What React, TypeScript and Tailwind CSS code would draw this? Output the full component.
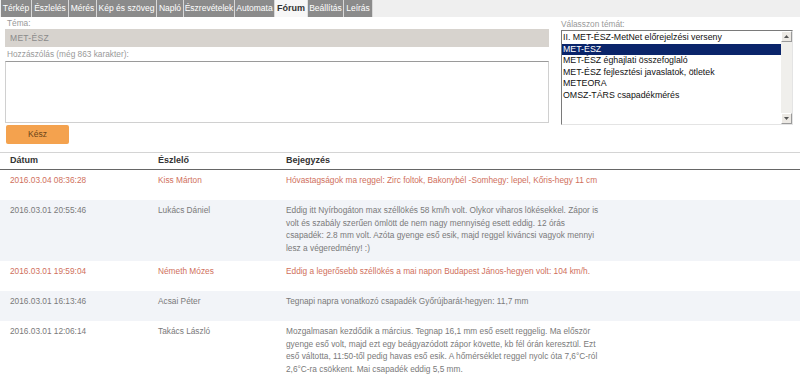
import React from "react";

const tabs: { label: string; w: number; active?: boolean }[] = [
  { label: "Térkép", w: 31 },
  { label: "Észlelés", w: 37 },
  { label: "Mérés", w: 28 },
  { label: "Kép és szöveg", w: 60 },
  { label: "Napló", w: 27 },
  { label: "Észrevételek", w: 51 },
  { label: "Automata", w: 40 },
  { label: "Fórum", w: 33, active: true },
  { label: "Beállítás", w: 36 },
  { label: "Leírás", w: 29 },
];

const topics = [
  "II. MET-ÉSZ-MetNet előrejelzési verseny",
  "MET-ÉSZ",
  "MET-ÉSZ éghajlati összefoglaló",
  "MET-ÉSZ fejlesztési javaslatok, ötletek",
  "METEORA",
  "OMSZ-TÁRS csapadékmérés",
];

type Row = { date: string; name: string; lines: string[]; red?: boolean; shade?: boolean };

const rows: Row[] = [
  {
    date: "2016.03.04 08:36:28",
    name: "Kiss Márton",
    red: true,
    lines: ["Hóvastagságok ma reggel: Zirc foltok, Bakonybél -Somhegy: lepel, Kőris-hegy 11 cm"],
  },
  {
    date: "2016.03.01 20:55:46",
    name: "Lukács Dániel",
    shade: true,
    lines: [
      "Eddig itt Nyírbogáton max széllökés 58 km/h volt. Olykor viharos lökésekkel. Zápor is",
      "volt és szabály szerűen ömlött de nem nagy mennyiség esett eddig. 12 órás",
      "csapadék: 2.8 mm volt. Azóta gyenge eső esik, majd reggel kiváncsi vagyok mennyi",
      "lesz a végeredmény! :)",
    ],
  },
  {
    date: "2016.03.01 19:59:04",
    name: "Németh Mózes",
    red: true,
    lines: ["Eddig a legerősebb széllökés a mai napon Budapest János-hegyen volt: 104 km/h."],
  },
  {
    date: "2016.03.01 16:13:46",
    name: "Acsai Péter",
    shade: true,
    lines: ["Tegnapi napra vonatkozó csapadék Győrújbarát-hegyen: 11,7 mm"],
  },
  {
    date: "2016.03.01 12:06:14",
    name: "Takács László",
    lines: [
      "Mozgalmasan kezdődik a március. Tegnap 16,1 mm eső esett reggelig. Ma először",
      "gyenge eső volt, majd ezt egy beágyazódott zápor követte, kb fél órán keresztül. Ezt",
      "eső váltotta, 11:50-től pedig havas eső esik. A hőmérséklet reggel nyolc óta 7,6°C-ról",
      "2,6°C-ra csökkent. Mai csapadék eddig 5,5 mm.",
    ],
  },
];

function ScrollBtn({ up }: { up?: boolean }) {
  return (
    <div className="w-[11px] h-[11px] bg-[#ece9e4] border border-t-white border-l-white border-r-[#9a9a9a] border-b-[#9a9a9a] flex items-center justify-center">
      <svg width="5" height="3" viewBox="0 0 5 3">
        {up ? <path d="M0 3 L2.5 0 L5 3 Z" fill="#555" /> : <path d="M0 0 L2.5 3 L5 0 Z" fill="#555" />}
      </svg>
    </div>
  );
}

export default function App() {
  return (
    <div className="w-[800px] h-[384px] overflow-hidden bg-white font-['Liberation_Sans',Arial,sans-serif] text-[8.3px]">
      {/* Tabs */}
      <div className="flex h-[17px] bg-[#efefef] pl-[1px]">
        {tabs.map((t) => (
          <div
            key={t.label}
            style={{ width: t.w }}
            className={
              t.active
                ? "h-full flex items-center justify-center text-[9px] font-bold text-[#333] bg-[#f7f7f7] border-r border-[#e0e0e0]"
                : "h-full flex items-center justify-center text-[8.5px] text-white bg-[#8b8b8b] border-r border-[#d8d8d8]"
            }
          >
            {t.label}
          </div>
        ))}
      </div>

      {/* Form */}
      <div className="flex">
        <div className="w-[544px] ml-[5px] flex flex-col">
          <div className="h-[11px] mt-[1px] pl-[2px] text-[#999] leading-[11px]">Téma:</div>
          <div className="h-[18px] bg-[#d7d3ce] flex items-center pl-[5px] text-[#8a8a8a] text-[8.5px] tracking-[0.3px]">
            MET-ÉSZ
          </div>
          <div className="h-[14px] pl-[2px] text-[#999] leading-[14px]">Hozzászólás (még 863 karakter):</div>
          <div className="h-[62px] bg-white border border-[#d0d0d0] border-t-[#9a9a9a]" />
          <div className="mt-[2px] ml-[1px] w-[63px] h-[19px] rounded-[2px] bg-[#f4a24e] flex items-center justify-center text-[#6b4419] text-[8.5px]">
            Kész
          </div>
        </div>
        <div className="ml-[12px] w-[232px] flex flex-col">
          <div className="h-[12px] mt-[1px] text-[#999] leading-[12px]">Válasszon témát:</div>
          <div className="h-[95px] flex border border-t-[#7a7a7a] border-l-[#7a7a7a] border-r-[#e4e4e4] border-b-[#e4e4e4] bg-white">
            <div className="flex-1 flex flex-col pt-[1px]">
              {topics.map((t, i) => (
                <div
                  key={t}
                  className={
                    i === 1
                      ? "h-[11.6px] leading-[11.6px] pl-[1px] text-[8.8px] bg-[#0a246a] text-white"
                      : "h-[11.6px] leading-[11.6px] pl-[1px] text-[8.8px] text-[#111]"
                  }
                >
                  {t}
                </div>
              ))}
            </div>
            <div className="w-[11px] bg-[#f0efec] flex flex-col justify-between">
              <ScrollBtn up />
              <ScrollBtn />
            </div>
          </div>
        </div>
      </div>

      {/* Table */}
      <div className="mt-[8px] border-t border-[#d4d4d4]">
        <div className="flex h-[17px] items-center border-b border-[#666] text-[9px] font-bold text-[#333]">
          <div className="w-[158px] pl-[10px]">Dátum</div>
          <div className="w-[128px]">Észlelő</div>
          <div>Bejegyzés</div>
        </div>
        {rows.map((r) => (
          <div
            key={r.date}
            className={
              (r.shade ? "bg-[#f2f4f8] " : "bg-white ") +
              "flex min-h-[30px] pt-[4px] pb-[6px] leading-[12.7px] " +
              (r.red ? "text-[#d0705c]" : "text-[#7a7a7a]")
            }
          >
            <div className="w-[158px] pl-[10px]">{r.date}</div>
            <div className="w-[128px]">{r.name}</div>
            <div className="flex flex-col">
              {r.lines.map((l) => (
                <div key={l} className="whitespace-nowrap">
                  {l}
                </div>
              ))}
            </div>
          </div>
        ))}
      </div>
    </div>
  );
}
